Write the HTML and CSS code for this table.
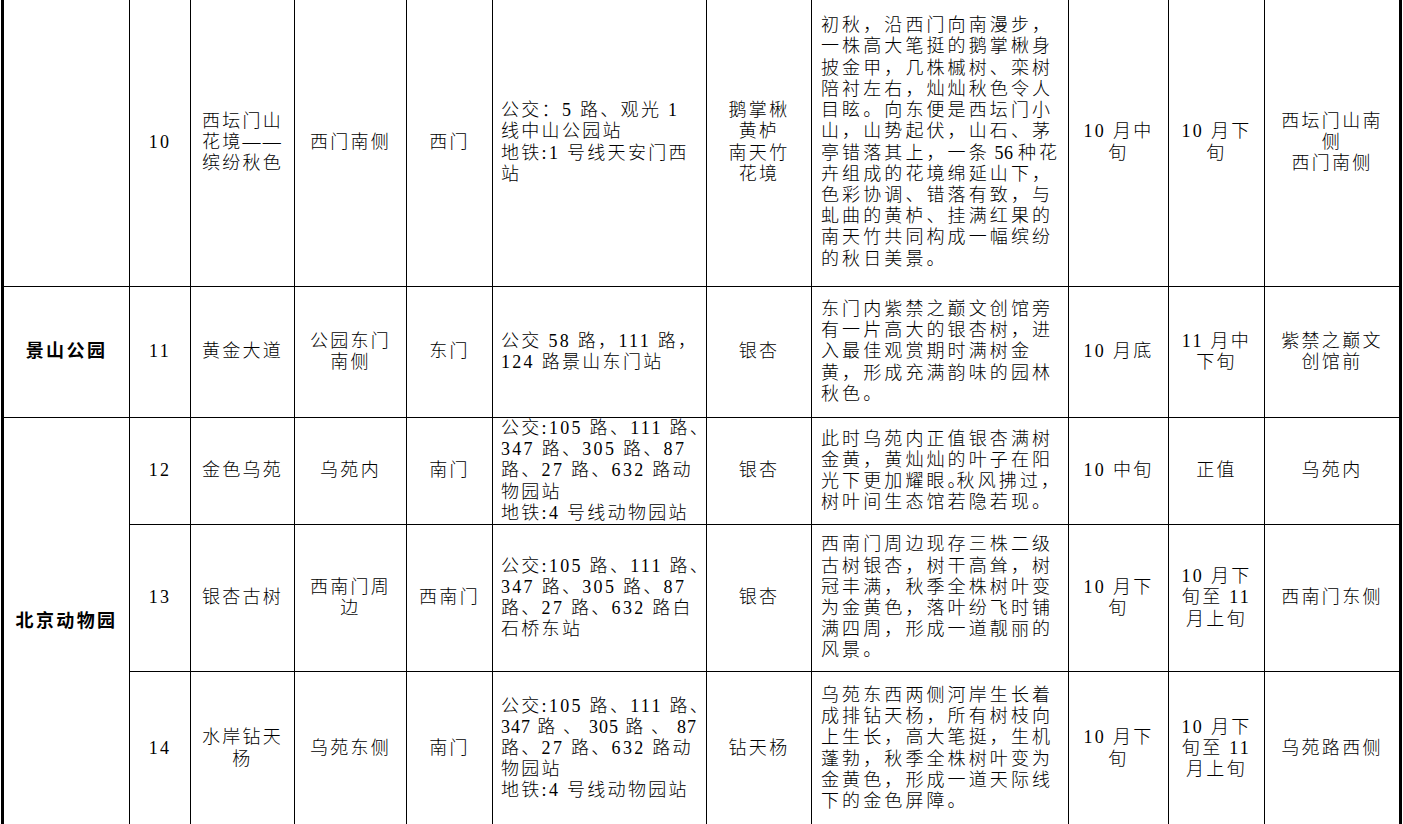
FILE: index.html
```html
<!DOCTYPE html>
<html lang="zh-CN">
<head>
<meta charset="utf-8">
<title>赏秋景点</title>
<link rel="stylesheet" href="styles.css">
</head>
<body>
<table class="sheet">
  <colgroup>
    <col class="c-park"><col class="c-no"><col class="c-name"><col class="c-loc"><col class="c-gate">
    <col class="c-bus"><col class="c-tree"><col class="c-desc"><col class="c-start"><col class="c-peak"><col class="c-spot">
  </colgroup>
  <tbody>
    <tr class="r10">
      <td></td>
      <td class="num">10</td>
      <td>西坛门山<br>花境——<br>缤纷秋色</td>
      <td>西门南侧</td>
      <td>西门</td>
      <td class="bus">公交：5 路、观光 1<br>线中山公园站<br>地铁:1 号线天安门西<br>站</td>
      <td>鹅掌楸<br>黄栌<br>南天竹<br>花境</td>
      <td class="desc">初秋，沿西门向南漫步，<br>一株高大笔挺的鹅掌楸身<br>披金甲，几株槭树、栾树<br>陪衬左右，灿灿秋色令人<br>目眩。向东便是西坛门小<br>山，山势起伏，山石、茅<br>亭错落其上，一条<span class="lat"> 56 </span>种花<br>卉组成的花境绵延山下，<br>色彩协调、错落有致，与<br>虬曲的黄栌、挂满红果的<br>南天竹共同构成一幅缤纷<br>的秋日美景。</td>
      <td>10 月中<br>旬</td>
      <td>10 月下<br>旬</td>
      <td>西坛门山南<br>侧<br>西门南侧</td>
    </tr>
    <tr class="r11">
      <td class="park">景山公园</td>
      <td class="num">11</td>
      <td>黄金大道</td>
      <td>公园东门<br>南侧</td>
      <td>东门</td>
      <td class="bus">公交 58 路，111 路，<br>124 路景山东门站</td>
      <td>银杏</td>
      <td class="desc">东门内紫禁之巅文创馆旁<br>有一片高大的银杏树，进<br>入最佳观赏期时满树金<br>黄，形成充满韵味的园林<br>秋色。</td>
      <td>10 月底</td>
      <td>11 月中<br>下旬</td>
      <td>紫禁之巅文<br>创馆前</td>
    </tr>
    <tr class="r12">
      <td class="park" rowspan="3">北京动物园</td>
      <td class="num">12</td>
      <td>金色乌苑</td>
      <td>乌苑内</td>
      <td>南门</td>
      <td class="bus">公交:105 路、111 路、<br>347 路、305 路、87<br>路、27 路、632 路动<br>物园站<br>地铁:4 号线动物园站</td>
      <td>银杏</td>
      <td class="desc">此时乌苑内正值银杏满树<br>金黄，黄灿灿的叶子在阳<br>光下更加耀眼<span class="tight">。</span>秋风拂过<span class="tight">，</span><br>树叶间生态馆若隐若现。</td>
      <td>10 中旬</td>
      <td>正值</td>
      <td>乌苑内</td>
    </tr>
    <tr class="r13">
      <td class="num">13</td>
      <td>银杏古树</td>
      <td>西南门周<br>边</td>
      <td>西南门</td>
      <td class="bus">公交:105 路、111 路、<br>347 路、305 路、87<br>路、27 路、632 路白<br>石桥东站</td>
      <td>银杏</td>
      <td class="desc">西南门周边现存三株二级<br>古树银杏，树干高耸，树<br>冠丰满，秋季全株树叶变<br>为金黄色，落叶纷飞时铺<br>满四周，形成一道靓丽的<br>风景。</td>
      <td>10 月下<br>旬</td>
      <td>10 月下<br>旬至 11<br>月上旬</td>
      <td>西南门东侧</td>
    </tr>
    <tr class="r14">
      <td class="num">14</td>
      <td>水岸钻天<br>杨</td>
      <td>乌苑东侧</td>
      <td>南门</td>
      <td class="bus">公交:105 路、111 路、<br><span class="spread">347 路 、 305 路 、 87</span><br>路、27 路、632 路动<br>物园站<br>地铁:4 号线动物园站</td>
      <td>钻天杨</td>
      <td class="desc">乌苑东西两侧河岸生长着<br>成排钻天杨，所有树枝向<br>上生长，高大笔挺，生机<br>蓬勃，秋季全株树叶变为<br>金黄色，形成一道天际线<br>下的金色屏障。</td>
      <td>10 月下<br>旬</td>
      <td>10 月下<br>旬至 11<br>月上旬</td>
      <td>乌苑路西侧</td>
    </tr>
  </tbody>
</table>
</body>
</html>
```
FILE: styles.css
```css
html, body {
  margin: 0;
  padding: 0;
  background: #fff;
}
body {
  font-family: "Liberation Serif", "Noto Sans CJK SC", serif;
  font-size: 18px;
  color: #000;
  overflow: hidden;
}
.sheet {
  border-collapse: separate;
  border-spacing: 0;
  table-layout: fixed;
  width: 1401px;
  margin: -1px 0 0 1px;
  border-left: 3px solid #000;
  border-right: 3px solid #000;
}
.c-park { width: 126px; }
.c-no { width: 61px; }
.c-name { width: 104px; }
.c-loc { width: 112px; }
.c-gate { width: 86px; }
.c-bus { width: 214px; }
.c-tree { width: 105px; }
.c-desc { width: 257px; }
.c-start { width: 100px; }
.c-peak { width: 96px; }
.c-spot { width: 134px; }

.sheet td {
  box-sizing: border-box;
  border-right: 1px solid #000;
  border-bottom: 1px solid #000;
  padding: 0 2px;
  text-align: center;
  vertical-align: middle;
  line-height: 21.2px;
  letter-spacing: 2.3px;
  white-space: nowrap;
  font-weight: 300;
}
.sheet td:last-child {
  border-right: none;
}
.sheet td.park {
  font-weight: 700;
  letter-spacing: 2.4px;
}
.sheet td.bus {
  text-align: left;
  padding-left: 8px;
}
.sheet td.desc {
  text-align: left;
  padding-left: 9px;
  letter-spacing: 3.1px;
}
.tight {
  letter-spacing: 0;
  font-feature-settings: "halt";
}
.lat {
  letter-spacing: 0.3px;
}
.spread {
  display: inline-block;
  width: 196px;
  letter-spacing: 1px;
  text-align: justify;
  text-align-last: justify;
  white-space: normal;
  vertical-align: top;
}
.r10 { height: 288px; }
.r11 { height: 131px; }
.r12 { height: 107px; }
.r13 { height: 147px; }
.r14 { height: 154px; }
```
